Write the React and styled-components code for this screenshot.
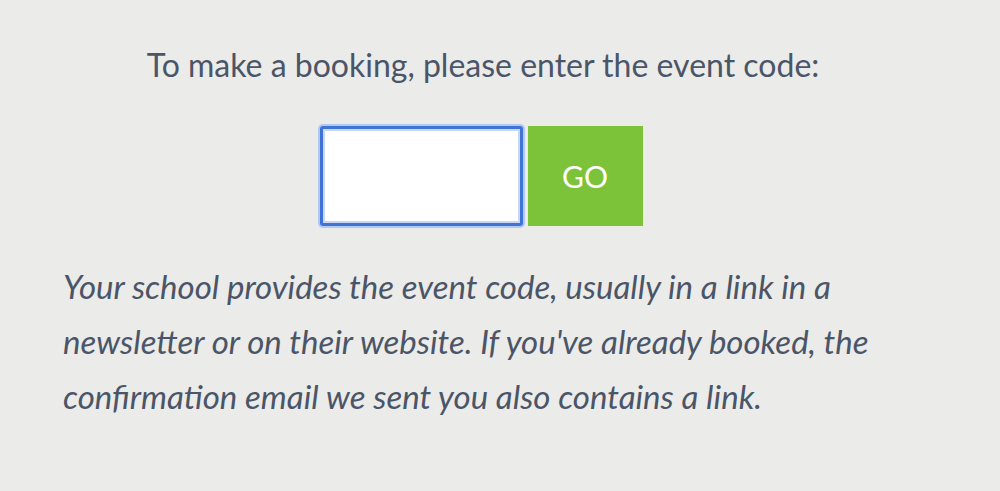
import React from "react";
import styled, { createGlobalStyle } from "styled-components";

const GlobalStyle = createGlobalStyle`
  html, body {
    margin: 0;
    padding: 0;
    background: #ebebe9;
  }
  body {
    font-family: Lato, "Open Sans", sans-serif;
    color: #4a5568;
  }
`;

const Page = styled.div`
  width: 1000px;
  height: 491px;
  box-sizing: border-box;
  padding: 42px 0 0 63px;
`;

const Content = styled.div`
  width: 840px;
`;

const Heading = styled.p`
  margin: 0;
  text-align: center;
  font-size: 32px;
  line-height: 46px;
  color: #4a5568;
`;

const CodeForm = styled.form`
  display: flex;
  justify-content: center;
  align-items: center;
  gap: 5px;
  padding-right: 4px;
  margin-top: 38px;
`;

const CodeInput = styled.input`
  box-sizing: border-box;
  width: 203px;
  height: 100px;
  margin: 0;
  border: 3px solid #3f74d6;
  border-radius: 3px;
  background: #fff;
  box-shadow: 0 0 0 2px #b1c8f0, inset 0 0 0 2px #c7d7f5;
  outline: none;
  font-size: 28px;
`;

const GoButton = styled.button`
  width: 115px;
  height: 100px;
  border: none;
  margin: 0;
  background: #7dc33a;
  color: #fff;
  font-family: Lato, "Open Sans", sans-serif;
  font-size: 30px;
  cursor: pointer;
`;

const Help = styled.p`
  margin: 33px 0 0 0;
  font-style: italic;
  font-size: 33px;
  line-height: 55px;
  color: #4a5568;
`;

export default function App() {
  return (
    <>
      <GlobalStyle />
      <Page>
        <Content>
          <Heading>To make a booking, please enter the event code:</Heading>
          <CodeForm onSubmit={(e) => e.preventDefault()}>
            <CodeInput type="text" aria-label="Event code" />
            <GoButton type="submit">GO</GoButton>
          </CodeForm>
          <Help>
            Your school provides the event code, usually in a link in a
            <br />
            newsletter or on their website. If you've already booked, the
            <br />
            confirmation email we sent you also contains a link.
          </Help>
        </Content>
      </Page>
    </>
  );
}
